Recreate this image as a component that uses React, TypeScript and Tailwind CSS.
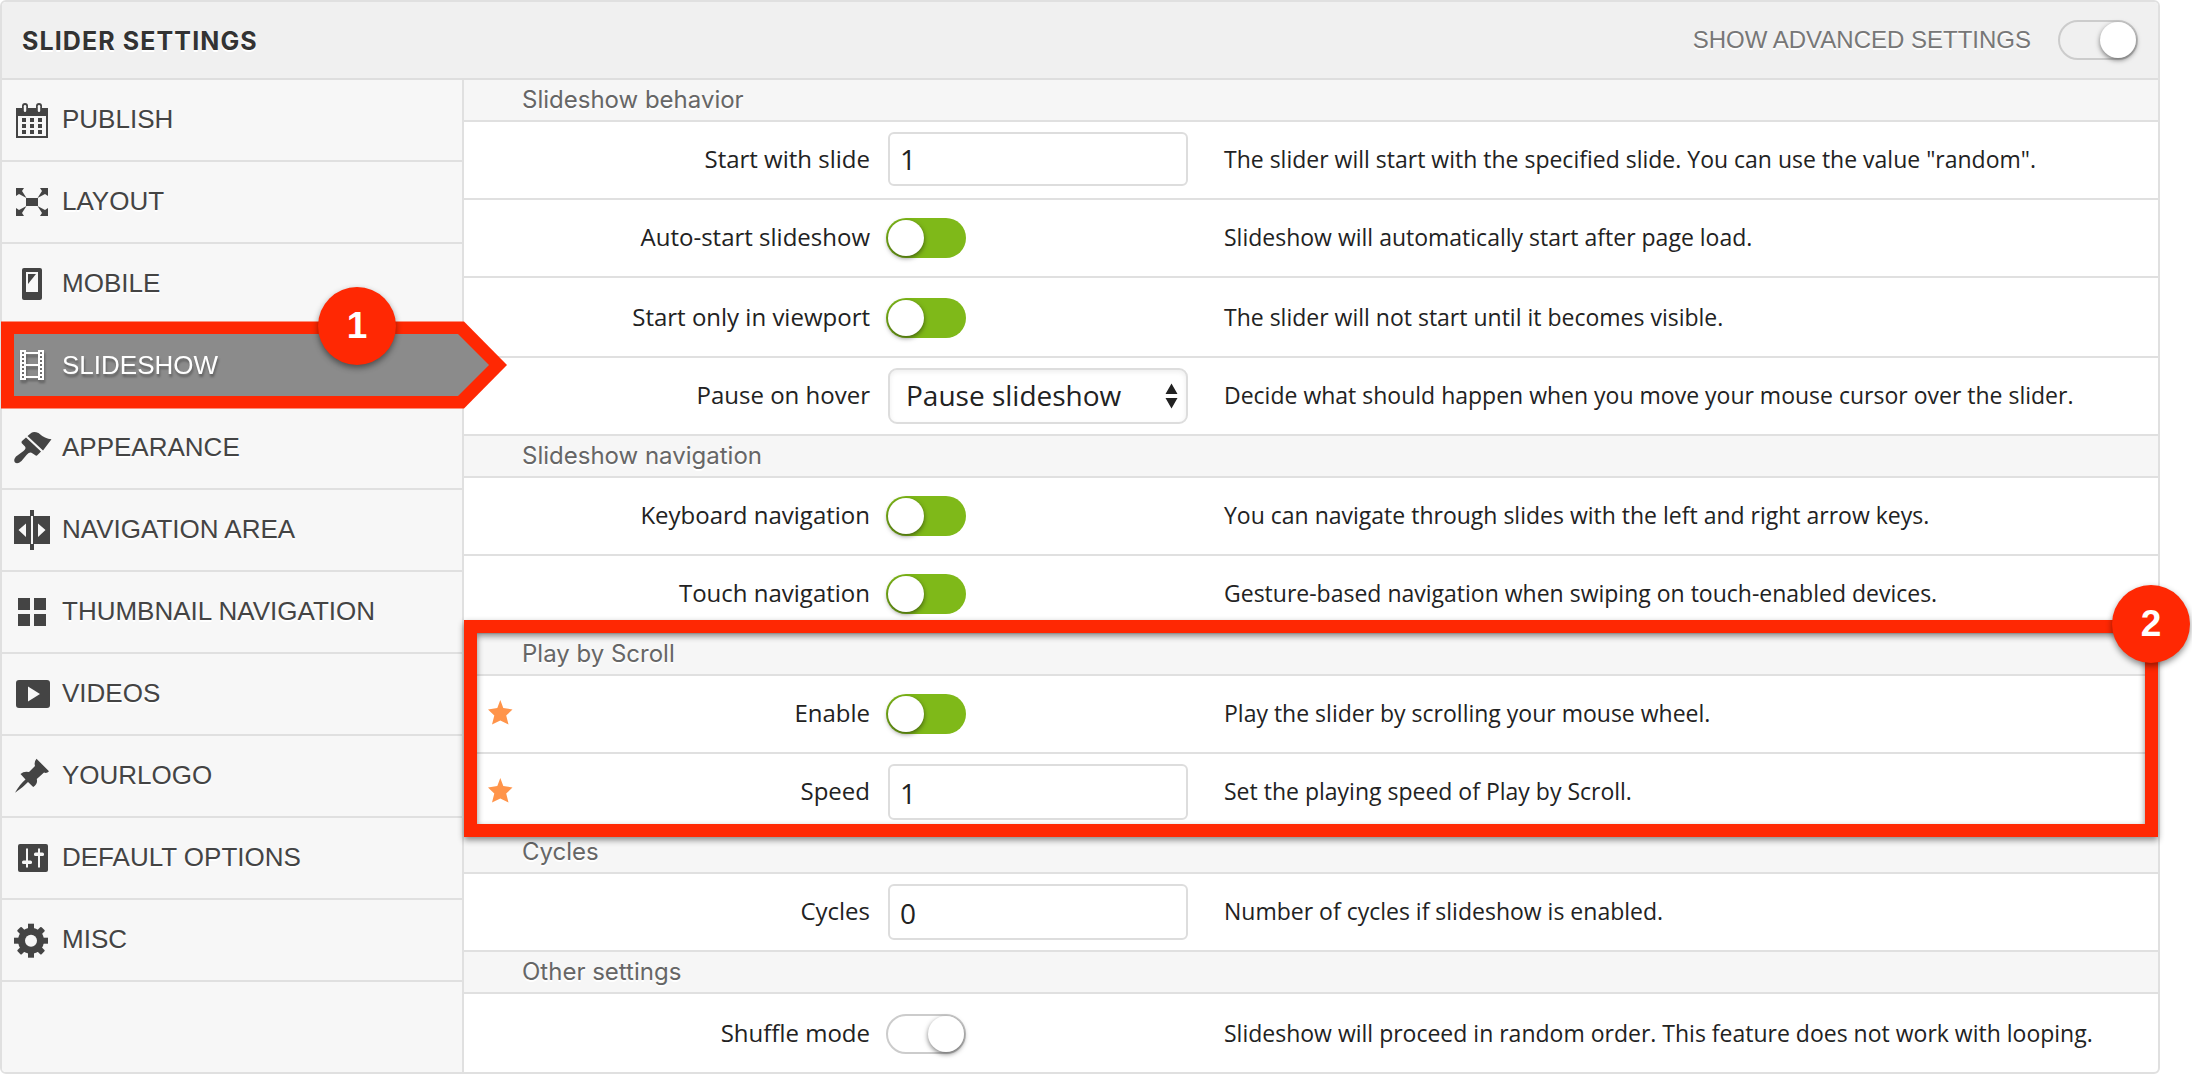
import type { ReactNode } from 'react';

const OPEN = "font-['Open_Sans','Noto_Sans',sans-serif]";
const INTER = "font-['Inter',sans-serif]";
const ARIAL = "font-['Liberation_Sans',Arial,sans-serif]";

function Icon({ children }: { children: ReactNode }) {
  return (
    <svg viewBox="0 0 40 44" width="40" height="44" fill="currentColor" className="shrink-0">
      {children}
    </svg>
  );
}

const PAPER = '#f7f7f7';

const icons: Record<string, ReactNode> = {
  calendar: (
    <Icon>
      <path d="M4 10H36V40H4Z" />
      <path d="M6 18H34V38H6Z" fill={PAPER} />
      {[20, 26, 32].map((y) => [10, 18, 26].map((x) => <rect key={`${x}-${y}`} x={x} y={y} width="4" height="4" />))}
      <rect x="10" y="5" width="6" height="10" rx="3" />
      <rect x="24" y="5" width="6" height="10" rx="3" />
      <rect x="11.8" y="7" width="2.4" height="7" rx="1.2" fill={PAPER} />
      <rect x="25.8" y="7" width="2.4" height="7" rx="1.2" fill={PAPER} />
    </Icon>
  ),
  layout: (
    <Icon>
      <rect x="14" y="18" width="12" height="8" />
      <path d="M4 8H12L10 11L14.5 18L7 14L4 16Z" />
      <path d="M36 8H28L30 11L25.5 18L33 14L36 16Z" />
      <path d="M4 36H12L10 33L14.5 26L7 30L4 28Z" />
      <path d="M36 36H28L30 33L25.5 26L33 30L36 28Z" />
    </Icon>
  ),
  mobile: (
    <Icon>
      <rect x="10" y="6" width="20" height="32" rx="2" />
      <rect x="14" y="10" width="12" height="20" fill={PAPER} />
      <path d="M16 12H24L16 22Z" />
    </Icon>
  ),
  film: (
    <Icon>
      <path
        fillRule="evenodd"
        d="M8 6H14V8H26V6H32V36H26V34H14V36H8ZM14 10V20H26V10ZM14 22V32H26V22ZM10 8V10H12V8ZM10 12V14H12V12ZM10 16V18H12V16ZM10 20V22H12V20ZM10 24V26H12V24ZM10 28V30H12V28ZM10 32V34H12V32ZM28 8V10H30V8ZM28 12V14H30V12ZM28 16V18H30V16ZM28 20V22H30V20ZM28 24V26H30V24ZM28 28V30H30V28ZM28 32V34H30V32Z"
      />
    </Icon>
  ),
  brush: (
    <Icon>
      <path d="M9.8 17.3Q9 16 10 15L14 11.5L29 25.5L25 29.5Q24 30 23 29L19.5 26.8Q17 25.5 14.5 29L9.5 35Q5.5 38.5 3 36.5Q1 34 4 30.5L11.5 25Q14.5 22.5 13 20.5Z" />
      <path d="M15.5 10L19.5 6.8Q22 5.2 26.5 7Q33 13 39.5 13.2L31 24.5Z" />
    </Icon>
  ),
  area: (
    <Icon>
      <rect x="2" y="8" width="36" height="28" />
      <rect x="18" y="2" width="4" height="40" />
      <rect x="19" y="8" width="2" height="28" fill={PAPER} />
      <path d="M6.5 22L14 15.5V29ZM33.5 22L26 15.5V29Z" fill={PAPER} />
    </Icon>
  ),
  grid: (
    <Icon>
      <path d="M6 8H18V20H6ZM22 8H34V20H22ZM6 24H18V36H6ZM22 24H34V36H22Z" />
    </Icon>
  ),
  video: (
    <Icon>
      <rect x="4" y="8" width="34" height="28" rx="3" />
      <path d="M16 14.5V29.5L28 22Z" fill={PAPER} />
    </Icon>
  ),
  pin: (
    <Icon>
      <path d="M24.5 4.8L37 17.2Q35 19.6 32 18.6L24.8 25Q26 30 21.2 33L16 28Q11 33.5 3 38.8Q8 30 13.5 25.5L8.5 20Q12 16.8 17 18L23 12Q21.8 8 24.5 4.8Z" />
    </Icon>
  ),
  sliders: (
    <Icon>
      <rect x="6" y="8" width="30" height="28" rx="2" />
      <g fill={PAPER}>
        <rect x="14" y="12.5" width="2" height="19" />
        <rect x="10" y="24.5" width="10" height="3.5" rx="1.5" />
        <rect x="26" y="12.5" width="2" height="19" />
        <rect x="22" y="16.5" width="10" height="3.5" rx="1.5" />
      </g>
    </Icon>
  ),
  gear: (
    <Icon>
      <g transform="translate(19 22.7)">
        <circle r="13" />
        <rect x="-3" y="-17" width="6" height="34" />
        <rect x="-17" y="-3" width="34" height="6" />
        <rect x="-3" y="-17" width="6" height="34" rx="1" transform="rotate(45)" />
        <rect x="-3" y="-17" width="6" height="34" rx="1" transform="rotate(-45)" />
        <circle r="6" fill={PAPER} />
      </g>
    </Icon>
  ),
};

const menu = [
  { icon: 'calendar', label: 'PUBLISH' },
  { icon: 'layout', label: 'LAYOUT' },
  { icon: 'mobile', label: 'MOBILE' },
  { icon: 'film', label: 'SLIDESHOW', active: true },
  { icon: 'brush', label: 'APPEARANCE' },
  { icon: 'area', label: 'NAVIGATION AREA' },
  { icon: 'grid', label: 'THUMBNAIL NAVIGATION' },
  { icon: 'video', label: 'VIDEOS' },
  { icon: 'pin', label: 'YOURLOGO' },
  { icon: 'sliders', label: 'DEFAULT OPTIONS' },
  { icon: 'gear', label: 'MISC' },
];

function Badge({ n, className }: { n: number; className: string }) {
  return (
    <span
      className={`absolute z-20 flex size-[78px] items-center justify-center rounded-full bg-[#ff2803] pb-[2px] text-[37px] leading-none font-bold text-white shadow-[0_3px_6px_rgba(0,0,0,0.45)] ${ARIAL} ${className}`}
    >
      {n}
    </span>
  );
}

function MenuItem({ icon, label, active }: { icon: string; label: string; active?: boolean }) {
  return (
    <li className="relative flex h-[82px] items-center border-b-2 border-[#e0e0e0] pl-[10px]">
      {active && (
        <>
          <svg width="508" height="88" viewBox="0 0 508 88" className="absolute -top-[5px] -left-px max-w-none">
            <path d="M0 0.5H463L506 44L463 87.5H0Z" fill="#ff2803" />
            <path d="M13 13H457L488 44L457 75H13Z" fill="#8b8b8b" />
          </svg>
          <Badge n={1} className="-top-[39px] left-[316px]" />
        </>
      )}
      <span
        className={
          active
            ? 'relative flex items-center text-white [filter:drop-shadow(1px_3px_1px_rgba(0,0,0,0.3))]'
            : 'flex items-center text-[#444] [text-shadow:0_2px_0_#fff]'
        }
      >
        {icons[icon]}
        <span className={`pb-[2px] pl-[10px] text-[26px] leading-[30px] whitespace-nowrap ${ARIAL}`}>{label}</span>
      </span>
    </li>
  );
}

function Toggle({ on }: { on?: boolean }) {
  return on ? (
    <span className="-ml-[2px] flex h-10 w-20 rounded-full bg-[#7fb919] p-[2px]">
      <span className="size-9 rounded-full bg-white shadow-[0_2px_5px_rgba(0,0,0,0.5)]" />
    </span>
  ) : (
    <span className="-ml-[2px] flex h-10 w-20 justify-end rounded-full border-2 border-[#ccc]">
      <span className="size-9 rounded-full bg-white shadow-[0_2px_5px_rgba(0,0,0,0.5)]" />
    </span>
  );
}

function Field({ value, short }: { value: string; short?: boolean }) {
  return (
    <span
      className={`flex w-[300px] items-center rounded-[6px] border-2 border-[#ddd] bg-white pl-[10px] text-[28px] leading-none text-[#222] ${OPEN} ${short ? 'mb-[2px] h-[54px]' : 'h-14 pt-[2px]'}`}
    >
      {value}
    </span>
  );
}

function Select({ value }: { value: string }) {
  return (
    <span
      className={`flex h-14 w-[300px] items-center justify-between rounded-[9px] border-2 border-[#ddd] bg-white pr-[8px] pl-[16px] text-[28px] leading-none text-[#222] shadow-[inset_0_2px_5px_rgba(0,0,0,0.07)] ${OPEN}`}
    >
      <span className="pb-[2px]">{value}</span>
      <svg width="13" height="26" viewBox="0 0 13 26" fill="#222">
        <path d="M6.5 0.5L12.5 11H0.5ZM6.5 25.5L12.5 15H0.5Z" />
      </svg>
    </span>
  );
}

function Section({ title }: { title: string }) {
  return (
    <h2
      className={`flex h-[42px] items-center border-b-2 border-[#e0e0e0] bg-[#f6f6f6] pl-[58px] text-[24px] leading-none font-normal text-[#666] [text-shadow:0_2px_0_#fff] ${INTER}`}
    >
      {title}
    </h2>
  );
}

function Row({
  label,
  text,
  children,
  star,
  tall,
  last,
}: {
  label: string;
  text: string;
  children: ReactNode;
  star?: boolean;
  tall?: boolean;
  last?: boolean;
}) {
  return (
    <div
      className={`grid grid-cols-[64px_342px_354px_1fr] items-center border-[#e0e0e0] leading-[34px] text-[#222] ${OPEN} ${
        tall ? 'h-[80px] border-b-2 pt-[2px]' : last ? 'h-[78px] pt-[2px]' : 'h-[78px] border-b-2'
      }`}
    >
      <span className="pl-6">
        {star && (
          <svg width="25" height="25" viewBox="0 0 25 25" fill="#ff944a" className="mb-[3px]">
            <path d="M12.3 0L15.3 8L24.5 9.5L18.2 15.5L20.5 24.5L12.3 20.5L4 24.5L6.3 15.5L0 9.5L9.3 8Z" />
          </svg>
        )}
      </span>
      <span className="pb-[2px] text-right text-[24px]">{label}</span>
      <span className={tall ? 'flex pb-[2px] pl-[18px]' : 'flex pl-[18px]'}>{children}</span>
      <span className="pb-[2px] text-[23px] whitespace-nowrap">{text}</span>
    </div>
  );
}

export default function App() {
  return (
    <div className="h-[1074px] w-[2192px] bg-white">
      <div className="flex h-full w-[2160px] flex-col rounded-[6px] border-2 border-[#e0e0e0] bg-white">
        <header className="flex h-[78px] shrink-0 items-center justify-between rounded-t-[4px] border-b-2 border-[#dedede] bg-[#f0f0f0] pr-5 pl-5">
          <h1
            className={`pt-[2px] text-[25px] leading-none font-bold tracking-[1.1px] text-[#333] [text-shadow:0_2px_0_#fff] ${INTER}`}
          >
            SLIDER SETTINGS
          </h1>
          <div className="flex items-center">
            <span className={`pr-[29px] pb-px text-[24px] leading-none text-[#777] [text-shadow:0_2px_0_#fff] ${ARIAL}`}>
              SHOW ADVANCED SETTINGS
            </span>
            <Toggle />
          </div>
        </header>
        <div className="flex min-h-0 flex-1">
          <nav className="relative z-10 w-[462px] shrink-0 rounded-bl-[4px] border-r-2 border-[#e0e0e0] bg-[#f7f7f7]">
            <ul>
              {menu.map((m) => (
                <MenuItem key={m.label} {...m} />
              ))}
            </ul>
          </nav>
          <main className="flex-1">
            <Section title="Slideshow behavior" />
            <Row label="Start with slide" text={'The slider will start with the specified slide. You can use the value "random".'}>
              <Field value="1" short />
            </Row>
            <Row label="Auto-start slideshow" text="Slideshow will automatically start after page load.">
              <Toggle on />
            </Row>
            <Row label="Start only in viewport" text="The slider will not start until it becomes visible." tall>
              <span className="pt-[2px]">
                <Toggle on />
              </span>
            </Row>
            <Row label="Pause on hover" text="Decide what should happen when you move your mouse cursor over the slider.">
              <Select value="Pause slideshow" />
            </Row>
            <Section title="Slideshow navigation" />
            <Row label="Keyboard navigation" text="You can navigate through slides with the left and right arrow keys.">
              <Toggle on />
            </Row>
            <Row label="Touch navigation" text="Gesture-based navigation when swiping on touch-enabled devices.">
              <Toggle on />
            </Row>
            <div className="relative">
              <Section title="Play by Scroll" />
              <Row label="Enable" text="Play the slider by scrolling your mouse wheel." star>
                <Toggle on />
              </Row>
              <Row label="Speed" text="Set the playing speed of Play by Scroll." star>
                <Field value="1" />
              </Row>
              <div className="absolute inset-x-0 -top-[14px] -bottom-[5px] z-10 border-[13px] border-[#ff2803] [filter:drop-shadow(0_3px_3px_rgba(0,0,0,0.45))]" />
              <Badge n={2} className="-top-[49px] -right-[32px]" />
            </div>
            <Section title="Cycles" />
            <Row label="Cycles" text="Number of cycles if slideshow is enabled.">
              <Field value="0" />
            </Row>
            <Section title="Other settings" />
            <Row label="Shuffle mode" text="Slideshow will proceed in random order. This feature does not work with looping." last>
              <Toggle />
            </Row>
          </main>
        </div>
      </div>
    </div>
  );
}
